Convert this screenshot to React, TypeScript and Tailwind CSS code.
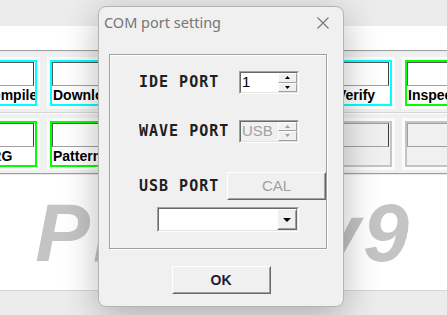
import React from 'react'

type Tone = 'cyan' | 'green' | 'off'

const ROW1: { label: string; tone: Tone }[] = [
  { label: 'Compile', tone: 'cyan' },
  { label: 'Download', tone: 'cyan' },
  { label: 'Erase', tone: 'cyan' },
  { label: 'Blank', tone: 'cyan' },
  { label: 'Program', tone: 'cyan' },
  { label: 'Verify', tone: 'cyan' },
  { label: 'Inspect', tone: 'green' },
]

const ROW2: { label: string; tone: Tone }[] = [
  { label: 'PRG', tone: 'green' },
  { label: 'Pattern', tone: 'green' },
  { label: 'Signal', tone: 'green' },
  { label: 'Timing', tone: 'green' },
  { label: 'Auto', tone: 'off' },
  { label: '', tone: 'off' },
  { label: '', tone: 'off' },
]

const sans = { fontFamily: '"Liberation Sans", Arial, sans-serif' }
const mono = { fontFamily: '"DejaVu Sans Mono", monospace' }

function ToolButton({ label, tone }: { label: string; tone: Tone }) {
  const border =
    tone === 'cyan' ? 'border-[#00ffff]' : tone === 'green' ? 'border-[#00ff00]' : 'border-[#c4c4c4]'
  const off = tone === 'off'
  return (
    <div className="w-[64px] shrink-0 bg-[#fbfbfb] p-[3px]">
      <div className={`h-[46px] border-2 ${border} ${off ? 'bg-[#f0f0f0]' : 'bg-white'} overflow-hidden`}>
        <div
          className={`mr-[1px] h-[24px] border border-t-[#5a5a5a] border-l-[#5a5a5a] border-b-[#a0a0a0] border-r-[#3c3c3c] ${
            off ? 'bg-[#f0f0f0] border-t-[#a0a0a0] border-l-[#a0a0a0]' : 'bg-white'
          }`}
        />
        <div className="whitespace-nowrap pl-[1px] text-[14px] font-bold leading-[18px] text-black" style={sans}>
          {label}
        </div>
      </div>
    </div>
  )
}

function Sunken({ className, children }: { className: string; children?: React.ReactNode }) {
  return (
    <div className={`border border-t-[#a0a0a0] border-l-[#a0a0a0] border-b-white border-r-white ${className}`}>
      <div className="flex h-full border border-t-[#696969] border-l-[#696969] border-b-[#e3e3e3] border-r-[#e3e3e3]">
        {children}
      </div>
    </div>
  )
}

function Arrow({ up, color, size = 'sm' }: { up?: boolean; color: string; size?: 'sm' | 'md' }) {
  const w = size === 'sm' ? 5 : 8
  const h = size === 'sm' ? 3 : 4
  return (
    <svg width={w} height={h} viewBox={`0 0 ${w} ${h}`}>
      <polygon points={up ? `0,${h} ${w / 2},0 ${w},${h}` : `0,0 ${w},0 ${w / 2},${h}`} fill={color} />
    </svg>
  )
}

function SpinBox({ value, disabled }: { value: string; disabled?: boolean }) {
  const arrow = disabled ? '#a0a0a0' : '#000'
  return (
    <Sunken className="h-[23px] w-[60px]">
      <div
        className={`flex flex-1 items-center pl-[1px] text-[15px] ${disabled ? 'bg-[#f0f0f0] text-[#a0a0a0]' : 'bg-white text-black'}`}
        style={sans}
      >
        {value}
      </div>
      <div className="flex w-[19px] flex-col bg-[#f0f0f0]">
        {[true, false].map((up) => (
          <div
            key={String(up)}
            className="flex flex-1 items-center justify-center border border-t-white border-l-white border-b-[#a0a0a0] border-r-[#a0a0a0]"
          >
            <Arrow up={up} color={arrow} />
          </div>
        ))}
      </div>
    </Sunken>
  )
}

function Raised({ className, children }: { className: string; children?: React.ReactNode }) {
  return (
    <div className={`border border-t-white border-l-white border-b-[#696969] border-r-[#696969] bg-[#f0f0f0] ${className}`}>
      <div className="flex h-full items-center justify-center border border-t-[#f0f0f0] border-l-[#f0f0f0] border-b-[#a0a0a0] border-r-[#a0a0a0]">
        {children}
      </div>
    </div>
  )
}

function PortLabel({ children, w }: { children: string; w: string }) {
  return (
    <span className={`${w} whitespace-pre text-[15px] font-bold tracking-[1px] text-[#202020]`} style={mono}>
      {children}
    </span>
  )
}

function ComDialog() {
  return (
    <div className="absolute left-[98px] top-[6px] flex h-[301px] w-[246px] flex-col rounded-[8px] border border-[#b4b4b4] bg-[#f0f0f0] shadow-[0_8px_36px_rgba(0,0,0,0.28)]">
      <div className="flex h-[32px] items-center justify-between pl-[5px] pr-[14px]">
        <span className="text-[14.5px] text-[#767676]" style={{ fontFamily: '"Noto Sans", sans-serif' }}>
          COM port setting
        </span>
        <svg width="12" height="12" viewBox="0 0 12 12">
          <path d="M0.5 0.5 L11.5 11.5 M11.5 0.5 L0.5 11.5" stroke="#767676" strokeWidth="1.1" />
        </svg>
      </div>

      <div className="ml-[10px] mt-[15px] h-[195px] w-[218px] border border-[#a0a0a0] shadow-[inset_1px_1px_0_#ffffff,1px_1px_0_#ffffff]">
        <div className="flex flex-col pl-[29px] pt-[16px]">
          <div className="flex h-[23px] items-center">
            <PortLabel w="w-[100px]">IDE PORT</PortLabel>
            <SpinBox value="1" />
          </div>
          <div className="mt-[25px] flex h-[24px] items-center">
            <PortLabel w="w-[100px]">WAVE PORT</PortLabel>
            <SpinBox value="USB" disabled />
          </div>
          <div className="mt-[29px] flex h-[28px] items-center">
            <PortLabel w="w-[88px]">USB PORT</PortLabel>
            <Raised className="h-[28px] w-[99px]">
              <span className="text-[15px] text-[#a0a0a0]" style={sans}>
                CAL
              </span>
            </Raised>
          </div>
          <Sunken className="ml-[18px] mt-[7px] h-[25px] w-[142px]">
            <div className="flex-1 bg-white" />
            <Raised className="h-full w-[20px]">
              <Arrow color="#000" size="md" />
            </Raised>
          </Sunken>
        </div>
      </div>

      <div className="mt-[17px] flex justify-center">
        <Raised className="h-[28px] w-[99px]">
          <span className="text-[14px] font-bold text-[#1c1c3a]" style={sans}>
            OK
          </span>
        </Raised>
      </div>
    </div>
  )
}

export default function App() {
  return (
    <div className="relative h-[315px] w-[447px] overflow-hidden bg-[#f0f0f0]">
      <div className="h-[26px] bg-[#ececec]" />
      <div className="h-[24px] bg-white" />
      <div className="h-[2px] border-t border-[#a0a0a0] bg-[#e8e8e8]" />

      <div className="pt-[5px]">
        <div className="-ml-[24px] flex gap-[7px]">
          {ROW1.map((b) => (
            <ToolButton key={b.label} {...b} />
          ))}
        </div>
        <div className="mt-[3px] h-[2px] border-t border-[#d4d4d4] bg-white" />
        <div className="-ml-[24px] mt-[4px] flex gap-[7px]">
          {ROW2.map((b, i) => (
            <ToolButton key={i} {...b} />
          ))}
        </div>
        <div className="mt-[3px] h-[2px] border-t border-[#a0a0a0] bg-[#e8e8e8]" />
      </div>

      <div className="flex h-[115px] items-center justify-center bg-white">
        <span
          className="text-[82px] font-bold italic leading-none tracking-[3px] text-[#c4c4c4]"
          style={sans}
        >
          PROG v9
        </span>
      </div>
      <div className="h-[1px] bg-[#d6d6d6]" />
      <div className="h-[24px] bg-[#ececec]" />

      <ComDialog />
    </div>
  )
}
